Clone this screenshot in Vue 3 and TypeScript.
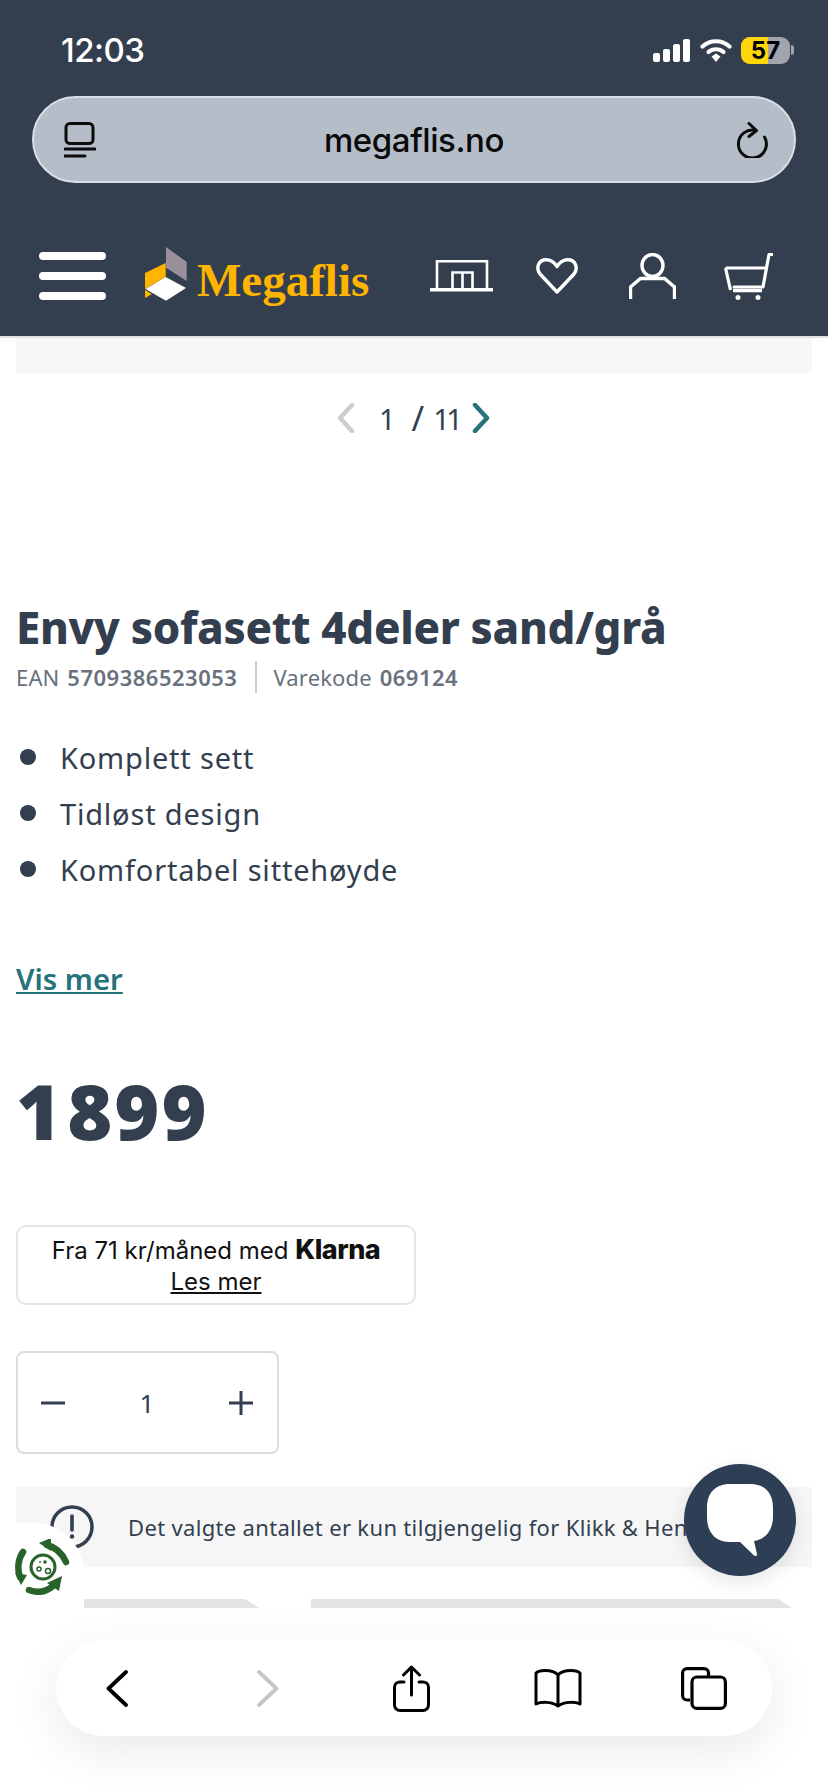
<script setup lang="ts">
// produktside for Megaflis, sett i mobil Safari
const bullets: string[] = ['Komplett sett', 'Tidløst design', 'Komfortabel sittehøyde']
</script>

<template>
  <div class="phone">
    <header class="top">
      <div class="status">
        <span class="time">12:03</span>
        <div class="status-icons">
          <svg class="signal" viewBox="0 0 38 23" width="38" height="23">
            <rect x="0" y="14" width="7" height="9" rx="2" fill="#fff" />
            <rect x="10" y="10" width="7" height="13" rx="2" fill="#fff" />
            <rect x="20" y="5" width="7" height="18" rx="2" fill="#fff" />
            <rect x="30" y="0" width="7" height="23" rx="2" fill="#fff" />
          </svg>
          <svg class="wifi" viewBox="0 0 32 24" width="32" height="24">
            <path d="M2.5 8.5C10 1.5 22 1.5 29.5 8.5" fill="none" stroke="#fff" stroke-width="4.2" stroke-linecap="round" />
            <path d="M8.5 14c4.300-3.700 10.700-3.700 15 0" fill="none" stroke="#fff" stroke-width="4.200" stroke-linecap="round" />
            <path d="M11.500 18.500 16 15.500l4.500 3L16 24z" fill="#fff" />
          </svg>
          <div class="battery">
            <span class="battery-fill"></span>
            <span class="battery-num">57</span>
          </div>
          <span class="battery-nub"></span>
        </div>
      </div>

      <div class="urlbar">
        <svg viewBox="0 0 32 36" width="32" height="36" fill="none" stroke="#0c0c0c" stroke-width="3">
          <rect x="2" y="1.500" width="27" height="20" rx="4" />
          <path d="M1 27h30" stroke-linecap="round" />
          <path d="M1 34h20" stroke-linecap="round" />
        </svg>
        <span class="url">megaflis.no</span>
        <svg viewBox="0 0 32 36" width="32" height="36" fill="none" stroke="#0c0c0c" stroke-width="3" stroke-linecap="round" stroke-linejoin="round">
          <path d="M20 8.500A14 14 0 1 0 28.500 15" />
          <path d="M13 1.500l7.500 7-7.500 6" />
        </svg>
      </div>

      <nav class="nav">
        <div class="burger"><i></i><i></i><i></i></div>
        <div class="logo">
          <svg viewBox="0 0 42 54" width="42" height="54">
            <polygon points="21,0 41.700,15 41.700,34 21,20.700" fill="#9a909c" />
            <polygon points="0,26 20.700,16 20.700,30 0,42" fill="#ffb400" />
            <polygon points="0.500,42 20.700,30 41,41 21,53.700" fill="#fff" />
            <polygon points="0,43 7,47 0,51" fill="#ffb400" />
          </svg>
          <span class="logo-text">Megaflis</span>
        </div>
        <div class="nav-icons">
          <svg viewBox="0 0 63 32" width="63" height="32" fill="none" stroke="#fff" stroke-width="2.600">
            <path d="M7 29V1.300h50V29" />
            <path d="M0 29.800h63" stroke-width="3.600" />
            <path d="M22.500 29V12.500h20V29M32.500 13v16" />
          </svg>
          <svg viewBox="0 0 42 36" width="42" height="36" fill="none" stroke="#fff" stroke-width="3.400" stroke-linejoin="round">
            <path d="M21 34 4 16C-.5 10 2.500 1.800 10 1.800c5 0 8.500 2.700 11 6.700 2.500-4 6-6.700 11-6.700 7.500 0 10.500 8.200 6 14.200z" />
          </svg>
          <svg viewBox="0 0 47 46" width="47" height="46" fill="none" stroke="#fff" stroke-width="3.400">
            <ellipse cx="23.500" cy="12.500" rx="10.500" ry="11" />
            <path d="M1.500 46V34l10-8.500h24l10 8.500v12" />
          </svg>
          <svg viewBox="0 0 49 48" width="49" height="48" fill="none" stroke="#fff" stroke-width="3.200" stroke-linejoin="round">
            <path d="M48 2.500h-3l-6 32.500H10" stroke-linecap="round" />
            <path d="M1.500 16h40M1.500 16l5 22" />
            <path d="M9 38.500h29" stroke-width="3.500" />
            <circle cx="14" cy="45.500" r="2.500" fill="#fff" stroke="none" />
            <circle cx="34" cy="45.500" r="2.500" fill="#fff" stroke="none" />
          </svg>
        </div>
      </nav>
    </header>

    <main class="content">
      <div class="gallery-bottom"></div>
      <div class="pager">
        <svg viewBox="0 0 18 30" width="18" height="30" fill="none" stroke="#cdcdcd" stroke-width="4.500" stroke-linecap="round" stroke-linejoin="round">
          <path d="M15 2 3 15l12 13" />
        </svg>
        <span class="pager-cur">1</span>
        <span class="pager-slash">/</span>
        <span class="pager-total">11</span>
        <svg viewBox="0 0 18 30" width="18" height="30" fill="none" stroke="#26737a" stroke-width="4.500" stroke-linecap="round" stroke-linejoin="round">
          <path d="m3 2 12 13L3 28" />
        </svg>
      </div>

      <h1 class="title">Envy sofasett 4deler sand/grå</h1>
      <div class="meta">
        <span>EAN <b>5709386523053</b></span>
        <span class="meta-line"></span>
        <span>Varekode <b>069124</b></span>
      </div>

      <ul class="bullets">
        <li v-for="item in bullets" :key="item">{{ item }}</li>
      </ul>

      <a class="more">Vis mer</a>
      <div class="price">1 899</div>

      <div class="klarna">
        <div>Fra 71 kr/måned med <strong>Klarna</strong></div>
        <a>Les mer</a>
      </div>

      <div class="stepper">
        <svg viewBox="0 0 24 24" width="24" height="24" stroke="#333f4f" stroke-width="3"><path d="M0 12h24" /></svg>
        <span>1</span>
        <svg viewBox="0 0 24 24" width="24" height="24" stroke="#333f4f" stroke-width="3"><path d="M0 12h24M12 0v24" /></svg>
      </div>

      <div class="notice">
        <svg viewBox="0 0 44 44" width="44" height="44" fill="none" stroke="#333f4f" stroke-width="3.500">
          <circle cx="22" cy="22" r="20" />
          <path d="M22 11v14" stroke-width="3.600" stroke-linecap="round" />
          <circle cx="22" cy="31.500" r="2.200" fill="#333f4f" stroke="none" />
        </svg>
        <span>Det valgte antallet er kun tilgjengelig for Klikk &amp; Hent</span>
      </div>

      <div class="strips">
        <span class="strip strip-a"></span>
        <span class="strip strip-b"></span>
      </div>
    </main>

    <!-- flytende elementer over innholdet -->
    <div class="chat">
      <svg viewBox="0 0 70 76" width="70" height="76">
        <path d="M25 2h20C60 2 68 11 68 26v8c0 14-7 23-19 25l3 13c.400 2-1.500 2.500-3 1.500L35 60H25C10 60 2 50 2 35v-9C2 11 10 2 25 2z" fill="#fff" />
      </svg>
    </div>

    <div class="eco">
      <svg viewBox="0 0 56 56" width="56" height="56">
        <g fill="none" stroke="#27632a" stroke-width="6.500" stroke-linecap="round">
          <path d="M32 6c8 2 15 8 19 17" />
          <path d="M5 38C2 30 3 20 8 13" />
          <path d="M14 51c8 3 17 2 24-4" />
        </g>
        <polygon points="24,4 36,-1 36,12" fill="#27632a" />
        <polygon points="0,34 12,36 6,46" fill="#27632a" />
        <polygon points="32,44 47,37 44,52" fill="#27632a" />
        <circle cx="28" cy="28" r="12" fill="none" stroke="#27632a" stroke-width="3" />
        <circle cx="24" cy="30" r="2" fill="none" stroke="#27632a" stroke-width="1.500" />
        <circle cx="33" cy="32" r="2.500" fill="none" stroke="#27632a" stroke-width="1.500" />
        <circle cx="30" cy="23" r="1.800" fill="#27632a" />
        <circle cx="25" cy="23" r="1" fill="#27632a" />
      </svg>
    </div>

    <div class="fade"></div>

    <div class="toolbar">
      <svg viewBox="0 0 22 37" width="22" height="37" fill="none" stroke="#000" stroke-width="3.800" stroke-linecap="round" stroke-linejoin="round">
        <path d="M20 2 2.500 18.500 20 35" />
      </svg>
      <svg viewBox="0 0 22 37" width="22" height="37" fill="none" stroke="#c6c6c6" stroke-width="3.800" stroke-linecap="round" stroke-linejoin="round">
        <path d="m2 2 17.500 16.500L2 35" />
      </svg>
      <svg viewBox="0 0 37 47" width="37" height="47" fill="none" stroke="#000" stroke-width="3" stroke-linecap="round" stroke-linejoin="round">
        <path d="M11 17H7c-3 0-5.500 2-5.500 5v18c0 3 2.500 5.500 5.500 5.500h23c3 0 5.500-2.500 5.500-5.500V22c0-3-2.500-5-5.500-5h-4" />
        <path d="M18.500 30V3M10.500 10l8-8 8 8" />
      </svg>
      <svg viewBox="0 0 48 39" width="48" height="39" fill="none" stroke="#000" stroke-width="3" stroke-linejoin="round">
        <path d="M24 6C21 2.500 16 1.500 11 1.500 7 1.500 3.500 2.500 2 4v31c4-2 15-3 22 2 7-5 18-4 22-2V4c-1.500-1.500-5-2.500-9-2.500C32 1.500 27 2.500 24 6zM24 6v31" />
      </svg>
      <svg viewBox="0 0 46 43" width="46" height="43" fill="none" stroke="#000" stroke-width="3.200">
        <path d="M9 33H6c-2.500 0-4.400-2-4.400-4.500V6c0-2.500 2-4.400 4.400-4.400h17c2.500 0 4.500 2 4.500 4.400v4" />
        <rect x="11" y="10" width="33.400" height="31.400" rx="5" />
      </svg>
    </div>
  </div>
</template>

<style>
html,
body {
  margin: 0;
  background: #fff;
}
</style>

<style scoped>
.phone {
  position: relative;
  width: 828px;
  height: 1792px;
  overflow: hidden;
  background: #fff;
  font-family: "Noto Sans", "Liberation Sans", sans-serif;
  color: #333f4f;
}

.top {
  height: 336px;
  box-sizing: border-box;
  background: #333f4f;
  padding-top: 30px;
}

.status {
  display: flex;
  justify-content: space-between;
  align-items: center;
  height: 40px;
  padding: 0 34px 0 61px;
  color: #fff;
}

.time {
  font-family: Inter, sans-serif;
  font-size: 33px;
  font-weight: 500;
  letter-spacing: -0.5px;
}

.status-icons {
  display: flex;
  align-items: center;
}

.wifi {
  margin: 0 9px 0 9px;
}

.battery {
  position: relative;
  width: 49px;
  height: 27px;
  border-radius: 9px;
  overflow: hidden;
  background: #a1a4ac;
  text-align: center;
}

.battery-fill {
  position: absolute;
  left: 0;
  top: 0;
  bottom: 0;
  width: 27px;
  background: #ffd60a;
}

.battery-num {
  position: relative;
  font-family: Inter, sans-serif;
  font-size: 24px;
  font-weight: 700;
  line-height: 27px;
  color: #000;
}

.battery-nub {
  width: 3px;
  height: 10px;
  margin-left: 1px;
  border-radius: 0 3px 3px 0;
  background: #a1a4ac;
}

.urlbar {
  display: flex;
  align-items: center;
  justify-content: space-between;
  box-sizing: border-box;
  width: 764px;
  height: 87px;
  margin: 26px 0 0 32px;
  padding: 0 26px 0 30px;
  background: #b5bdc8;
  border: 2px solid #d9dee4;
  border-radius: 44px;
}

.url {
  margin-right: 4px;
  font-family: Inter, sans-serif;
  font-size: 33px;
  font-weight: 500;
  color: #0a0a0a;
  letter-spacing: -0.4px;
}

.nav {
  display: flex;
  align-items: center;
  margin-top: 66px;
  padding-left: 39px;
}

.burger {
  display: flex;
  flex-direction: column;
  gap: 12px;
  width: 67px;
}

.burger i {
  display: block;
  height: 8px;
  border-radius: 4px;
  background: #fff;
}

.logo {
  display: flex;
  align-items: center;
  gap: 10px;
  margin-left: 39px;
}

.logo svg {
  margin-top: -4px;
}

.logo-text {
  position: relative;
  top: 4px;
  font-family: "Liberation Serif", serif;
  font-size: 47px;
  font-weight: 700;
  line-height: 54px;
  color: #ffb400;
}

.nav-icons {
  display: flex;
  align-items: center;
  margin-left: 61px;
}

.nav-icons svg:nth-child(2) {
  margin-left: 43px;
}

.nav-icons svg:nth-child(3) {
  margin-left: 51px;
}

.nav-icons svg:nth-child(4) {
  margin-left: 48px;
}

.content {
  padding: 0 16px;
  border-top: 2px solid #dfe1e3;
}

.gallery-bottom {
  height: 35px;
  background: #f6f7f7;
}

.pager {
  display: flex;
  align-items: center;
  height: 30px;
  margin-top: 30px;
  padding-left: 321px;
  font-size: 29px;
}

.pager-cur {
  margin-left: 24px;
}

.pager-slash {
  margin-left: 16px;
  font-size: 34px;
}

.pager-total {
  margin-left: 9px;
  margin-right: 13px;
  letter-spacing: -3.500px;
}

.title {
  margin: 165px 0 0;
  font-size: 43.800px;
  font-weight: 800;
  line-height: 58px;
  letter-spacing: -0.3px;
  color: #333f4f;
}

.meta {
  display: flex;
  align-items: center;
  height: 32px;
  margin-top: 5px;
  font-size: 22px;
  letter-spacing: 0.15px;
  color: #68717d;
}

.meta b {
  margin-left: 2px;
  font-weight: 600;
  letter-spacing: 0.5px;
}

.meta-line {
  width: 2px;
  height: 32px;
  margin: 0 16px 0 18px;
  background: #ccc;
}

.bullets {
  list-style: none;
  margin: 37px 0 0;
  padding: 0;
}

.bullets li {
  position: relative;
  height: 56px;
  padding-left: 44px;
  font-size: 29px;
  line-height: 56px;
  letter-spacing: 0.8px;
}

.bullets li::before {
  content: "";
  position: absolute;
  left: 4px;
  top: 19px;
  width: 16px;
  height: 16px;
  border-radius: 50%;
  background: #333f4f;
}

.more {
  display: block;
  margin-top: 61px;
  font-size: 29.300px;
  font-weight: 600;
  line-height: 40px;
  color: #26737a;
  text-decoration: underline;
}

.price {
  margin-top: 62px;
  font-size: 77px;
  font-weight: 900;
  line-height: 100px;
  letter-spacing: 2px;
  word-spacing: -18px;
  color: #333f4f;
}

.klarna {
  box-sizing: border-box;
  width: 400px;
  height: 80px;
  margin-top: 64px;
  padding-top: 7px;
  border: 2px solid #e5e5e5;
  border-radius: 10px;
  font-family: Inter, sans-serif;
  font-size: 24px;
  line-height: 31px;
  text-align: center;
  color: #111;
}

.klarna strong {
  font-size: 27px;
  font-weight: 800;
  letter-spacing: -0.5px;
}

.klarna a {
  text-decoration: underline;
}

.stepper {
  display: flex;
  align-items: center;
  justify-content: space-between;
  box-sizing: border-box;
  width: 263px;
  height: 103px;
  margin-top: 46px;
  padding: 0 24px 0 23px;
  border: 2px solid #dcdcdc;
  border-radius: 8px;
  font-size: 26px;
}

.notice {
  display: flex;
  align-items: center;
  height: 80px;
  margin-top: 33px;
  padding-left: 34px;
  background: #f6f6f7;
  font-size: 22px;
  letter-spacing: 0.33px;
  white-space: nowrap;
  overflow: hidden;
}

.notice span {
  margin-left: 34px;
}

.strips {
  display: flex;
  gap: 52px;
  margin-top: 32px;
  padding-left: 68px;
}

.strip {
  height: 9px;
  background: #e3e3e3;
  clip-path: polygon(0 0, calc(100% - 14px) 0, 100% 100%, 0 100%);
}

.strip-a {
  width: 175px;
}

.strip-b {
  width: 481px;
}

.chat {
  position: absolute;
  left: 684px;
  top: 1464px;
  display: flex;
  align-items: center;
  justify-content: center;
  width: 112px;
  height: 112px;
  border-radius: 50%;
  background: #2e3f55;
  box-shadow: 0 6px 20px rgba(0, 0, 0, 0.1);
}

.eco {
  position: absolute;
  left: 0;
  top: 1523px;
  box-sizing: border-box;
  width: 84px;
  height: 100px;
  padding: 16px 0 0 15px;
  background: #fff;
  border-top-right-radius: 50px;
}

.fade {
  position: absolute;
  left: 0;
  right: 0;
  top: 1608px;
  bottom: 0;
  background: #fff;
}

.toolbar {
  position: absolute;
  left: 56px;
  top: 1640px;
  display: flex;
  align-items: center;
  box-sizing: border-box;
  width: 716px;
  height: 96px;
  padding-left: 50px;
  border-radius: 48px;
  background: #fff;
  box-shadow: 0 14px 50px rgba(0, 0, 0, 0.09);
}

.toolbar svg:nth-child(2) {
  margin-left: 129px;
}

.toolbar svg:nth-child(3) {
  margin-left: 114px;
}

.toolbar svg:nth-child(4) {
  margin-left: 104px;
}

.toolbar svg:nth-child(5) {
  margin-left: 99px;
}
</style>
